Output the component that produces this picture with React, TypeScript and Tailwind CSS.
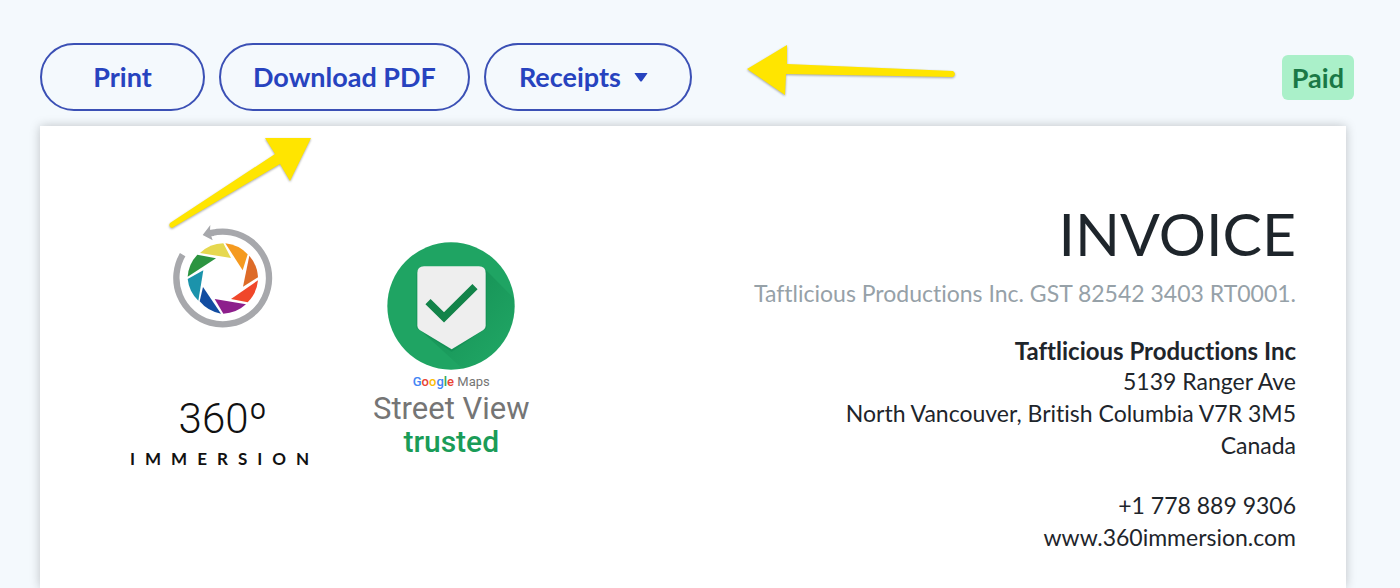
import React from 'react';
import clsx from 'clsx';

const ADDRESS = ['5139 Ranger Ave', 'North Vancouver, British Columbia V7R 3M5', 'Canada'];

const BLADES = [
  { fill: '#e6d84f', d: 'M150 370 A106 106 0 0 1 220 341 L243 385 Z' },
  { fill: '#f59a1f', d: 'M226 341 A106 106 0 0 1 293 374 L278 422 Z' },
  { fill: '#dd6b28', d: 'M298 378 A106 106 0 0 1 324 443 L279 471 Z' },
  { fill: '#f0472a', d: 'M324 452 A106 106 0 0 1 293 518 L243 508 Z' },
  { fill: '#8d1f8c', d: 'M288 524 A106 106 0 0 1 220 552 L194 508 Z' },
  { fill: '#124da1', d: 'M213 552 A106 106 0 0 1 149 515 L159 472 Z' },
  { fill: '#1b93ab', d: 'M145 513 A106 106 0 0 1 113 448 L160 422 Z' },
  { fill: '#2c9440', d: 'M113 441 A106 106 0 0 1 142 375 L198 386 Z' },
];

const PillButton = ({ className, children }: { className?: string; children: React.ReactNode }) => (
  <button
    type="button"
    className={clsx(
      'flex h-[68px] min-w-[165px] items-center justify-center rounded-full border-2 border-[#3b50b5] text-[27px] font-bold text-[#2743bf]',
      className ?? 'px-8'
    )}
  >
    {children}
  </button>
);

const ImmersionLogo = () => (
  <div className="flex w-[186px] flex-col items-center pt-[97px] text-[#111111]">
    <svg viewBox="60 280 321 321" className="size-[107px]" aria-hidden="true">
      <path d="M98 375 A139 139 0 1 0 185 310" fill="none" stroke="#a7a8ac" strokeWidth="19" />
      <path d="M158 316 L181 286 L180 300 L192 300 L192 319 L184 320 L188 332 Z" fill="#a7a8ac" />
      {BLADES.map(blade => (
        <path key={blade.fill} d={blade.d} fill={blade.fill} />
      ))}
    </svg>
    <div className="mt-[65px] font-['Roboto',sans-serif] text-[42px] font-light leading-[48px]">360º</div>
    <div className="mt-1 w-full text-[17px] leading-6 font-bold tracking-[10px] whitespace-nowrap">IMMERSION</div>
  </div>
);

const StreetViewLogo = () => (
  <div className="flex flex-col items-center pt-[115px] font-['Roboto',sans-serif]">
    <svg viewBox="80 32 390 390" className="size-[130px]" aria-hidden="true">
      <defs>
        <clipPath id="badge">
          <circle cx="275" cy="227" r="191" />
        </clipPath>
        <linearGradient id="long-shadow" x1="0" y1="0" x2="1" y2="1">
          <stop offset="0.3" stopColor="#0b7a45" stopOpacity="0.35" />
          <stop offset="0.7" stopColor="#0b7a45" stopOpacity="0" />
        </linearGradient>
      </defs>
      <circle cx="275" cy="227" r="191" fill="#1fa463" />
      <g clipPath="url(#badge)">
        <path d="M374 113 L520 260 L520 480 L380 480 L179 296 Z" fill="url(#long-shadow)" />
        <path d="M192 114 H362 Q382 114 382 134 V292 L277 364 L171 292 V134 Q171 114 192 114 Z" fill="#0f8a50" opacity="0.6" />
      </g>
      <path d="M194 108 H359 Q379 108 379 128 V286 Q379 294 372 299 L277 357 L181 299 Q174 294 174 286 V128 Q174 108 194 108 Z" fill="#eeeeee" />
      <path d="M206 214 L254 261 L347 169" fill="none" stroke="#128349" strokeWidth="22" />
    </svg>
    <div className="mt-[3px] text-[13px] leading-4 text-[#757575]">
      <span className="font-medium">
        <span className="text-[#4285f4]">G</span>
        <span className="text-[#ea4335]">o</span>
        <span className="text-[#fbbc05]">o</span>
        <span className="text-[#4285f4]">g</span>
        <span className="text-[#34a853]">l</span>
        <span className="text-[#ea4335]">e</span>
      </span>{' '}
      Maps
    </div>
    <div className="mt-[2px] text-[31px] leading-[34px] text-[#757575]">Street View</div>
    <div className="text-[30px] leading-8 font-medium text-[#1a9c58]">trusted</div>
  </div>
);

const Arrows = () => (
  <>
    <svg viewBox="740 40 220 60" className="pointer-events-none absolute top-10 left-[740px] h-[60px] w-[220px] drop-shadow-[0_1px_1px_rgba(0,0,0,0.35)]" aria-hidden="true">
      <path d="M747 69 L787 45 L787 64 L953 71 Q957 74 953 77 L786 74 L785 95 Z" fill="#ffe500" />
    </svg>
    <svg viewBox="160 130 160 110" className="pointer-events-none absolute top-[130px] left-40 h-[110px] w-40 drop-shadow-[0_1px_1px_rgba(0,0,0,0.35)]" aria-hidden="true">
      <path d="M311 138 L265 138 L275 154 L170 223 Q168 227 172 228 L280 164 L290 181 Z" fill="#ffe500" />
    </svg>
  </>
);

export default function App() {
  return (
    <main className="relative flex min-h-screen flex-col bg-[#f4f9fd] font-['Lato',sans-serif] text-[#1e252b] [font-variant-ligatures:none]">
      {/* Toolbar */}
      <header className="flex items-center justify-between pt-[43px] pr-[46px] pl-10">
        <div className="flex gap-[14px]">
          <PillButton>Print</PillButton>
          <PillButton>Download PDF</PillButton>
          <PillButton className="gap-[13px] pr-[42px] pl-[33px]">
            Receipts
            <svg viewBox="0 0 14 9" className="h-[9px] w-[14px]" aria-hidden="true">
              <path d="M1 0 H13 Q14 0 13 1 L8 8 Q7 9 6 8 L1 1 Q0 0 1 0 Z" fill="currentColor" />
            </svg>
          </PillButton>
        </div>
        <span className="rounded-md bg-[#aaf0c9] px-[10px] py-[6px] text-[27px] leading-[33px] font-bold text-[#1a7846]">Paid</span>
      </header>

      {/* Invoice sheet */}
      <section className="mt-[15px] mr-[54px] ml-10 flex flex-1 justify-between bg-white pr-[50px] pl-[90px] shadow-[0_0_10px_rgba(0,0,0,0.22)]">
        <div className="flex gap-[57px]">
          <ImmersionLogo />
          <StreetViewLogo />
        </div>
        <div className="pt-[74px] pb-8 text-right text-[23px] leading-8">
          <h1 className="text-[59px] leading-[68px]">INVOICE</h1>
          <p className="mt-[9px] text-[#96a1a8]">Taftlicious Productions Inc. GST 82542 3403 RT0001.</p>
          <p className="mt-[26px] text-[24px] font-bold">Taftlicious Productions Inc</p>
          <address className="-mt-[2px] not-italic">
            {ADDRESS.map(line => (
              <p key={line}>{line}</p>
            ))}
            <p className="mt-7">+1 778 889 9306</p>
            <p>
              <a href="#">www.360immersion.com</a>
            </p>
          </address>
        </div>
      </section>

      <Arrows />
    </main>
  );
}
